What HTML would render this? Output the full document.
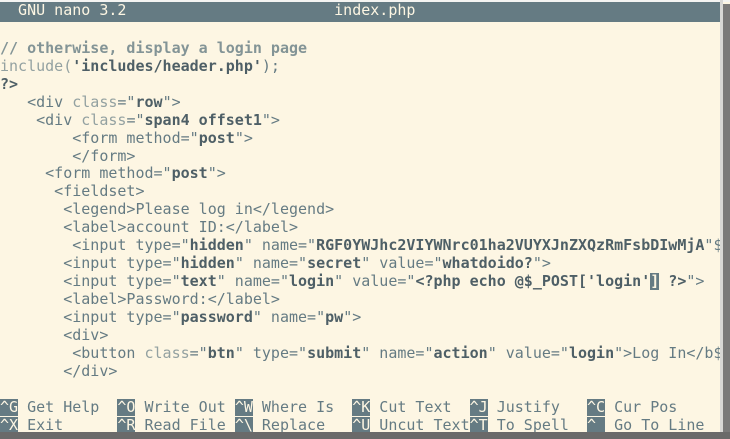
<!DOCTYPE html>
<html><head><meta charset="utf-8"><style>
html,body{margin:0;padding:0;width:730px;height:439px;overflow:hidden;background:#fdf6e3;}
body{position:relative;}
#top{position:absolute;left:0;top:0;width:730px;height:2px;background:#f4f4f2;}
#sb1{position:absolute;left:720px;top:0;width:3px;height:439px;background:#d8d8d6;}
#sb2{position:absolute;left:723px;top:4px;width:7px;height:435px;background:#7a7a7a;}
#bot{position:absolute;left:0;top:432px;width:730px;height:7px;background:#6a6a6a;}
#scr{position:absolute;left:0;top:2px;width:720px;font-family:"DejaVu Sans Mono","Liberation Mono",monospace;font-size:15px;color:#657b83;}
.l{height:17.95px;line-height:17.95px;white-space:pre;overflow:hidden;}
.title{background:#657b83;color:#fdf6e3;height:19.95px;}
.s{font-weight:bold;color:#4e5f66;}
.k{color:#93a1a1;}
.c{color:#839496;font-weight:bold;}
.cur{background:#657b83;color:#fdf6e3;}
.h{background:#657b83;color:#fdf6e3;}
</style></head><body>
<div id="top"></div>
<div id="scr">
<div class="l title">  GNU nano 3.2                       index.php                                   </div>
<div class="l"> </div>
<div class="l"><span class="c">// otherwise, display a login page</span></div>
<div class="l"><span class="k">include(</span><span class="s">'includes/header.php'</span>);</div>
<div class="l"><span class="s">?&gt;</span></div>
<div class="l">   &lt;div <span class="k">class</span>="<span class="s">row</span>"&gt;</div>
<div class="l">    &lt;div <span class="k">class</span>="<span class="s">span4 offset1</span>"&gt;</div>
<div class="l">        &lt;form method="<span class="s">post</span>"&gt;</div>
<div class="l">        &lt;/form&gt;</div>
<div class="l">     &lt;form method="<span class="s">post</span>"&gt;</div>
<div class="l">      &lt;fieldset&gt;</div>
<div class="l">       &lt;legend&gt;Please log in&lt;/legend&gt;</div>
<div class="l">       &lt;label&gt;account ID:&lt;/label&gt;</div>
<div class="l">        &lt;input type="<span class="s">hidden</span>" name="<span class="s">RGF0YWJhc2VIYWNrc01ha2VUYXJnZXQzRmFsbDIwMjA</span>"$</div>
<div class="l">       &lt;input type="<span class="s">hidden</span>" name="<span class="s">secret</span>" value="<span class="s">whatdoido?</span>"&gt;</div>
<div class="l">       &lt;input type="<span class="s">text</span>" name="<span class="s">login</span>" value="<span class="s">&lt;?php echo @$_POST['login'<span class="cur">]</span> ?&gt;</span>"&gt;</div>
<div class="l">       &lt;label&gt;Password:&lt;/label&gt;</div>
<div class="l">       &lt;input type="<span class="s">password</span>" name="<span class="s">pw</span>"&gt;</div>
<div class="l">       &lt;div&gt;</div>
<div class="l">        &lt;button <span class="k">class</span>="<span class="s">btn</span>" type="<span class="s">submit</span>" name="<span class="s">action</span>" value="<span class="s">login</span>"&gt;Log In&lt;/b$</div>
<div class="l">       &lt;/div&gt;</div>
<div class="l"> </div>
<div class="l"><span class="h">^G</span> Get Help  <span class="h">^O</span> Write Out <span class="h">^W</span> Where Is  <span class="h">^K</span> Cut Text  <span class="h">^J</span> Justify   <span class="h">^C</span> Cur Pos</div>
<div class="l"><span class="h">^X</span> Exit      <span class="h">^R</span> Read File <span class="h">^\</span> Replace   <span class="h">^U</span> Uncut Text<span class="h">^T</span> To Spell  <span class="h">^_</span> Go To Line</div>
</div>
<div id="sb1"></div><div id="sb2"></div><div id="bot"></div>
</body></html>
